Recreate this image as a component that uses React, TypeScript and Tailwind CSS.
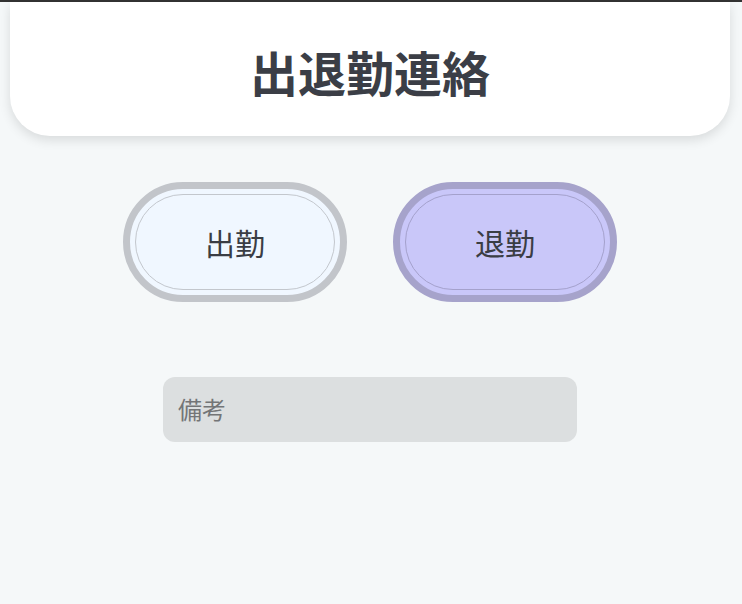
import { useState } from 'react';

const font = { fontFamily: '"Noto Sans CJK JP", "Noto Sans", sans-serif' };

export default function App() {
  const [mode, setMode] = useState<'in' | 'out'>('out');
  const [note, setNote] = useState('');

  return (
    <div className="min-h-[604px] bg-[#f5f8f9] border-t-2 border-[#333]" style={font}>
      <div className="w-[740px]">
        <header className="mx-[10px] h-[134px] bg-white rounded-b-[40px] shadow-[0_4px_12px_rgba(0,0,0,0.12)] flex items-center justify-center">
          <h1 className="text-[48px] font-bold text-[#3b3e46] leading-none mt-[4px]">出退勤連絡</h1>
        </header>

        <div className="mt-[46px] flex justify-center gap-[46px]">
          <button
            onClick={() => setMode('in')}
            className="w-[224px] h-[120px] rounded-full border-[7px] border-[#c2c5ca] bg-[#f0f7ff] p-[5px]"
          >
            <div className="h-full rounded-full border border-[#c3c7cd] flex items-center justify-center text-[30px] text-[#3a3d44]">
              出勤
            </div>
          </button>
          <button
            onClick={() => setMode('out')}
            className="w-[224px] h-[120px] rounded-full border-[7px] border-[#a6a3cb] bg-[#c9c7f9] p-[5px]"
          >
            <div className="h-full rounded-full border border-[#a4a1cc] flex items-center justify-center text-[30px] text-[#3a3d44]">
              退勤
            </div>
          </button>
        </div>

        <div className="mt-[75px] flex justify-center">
          <input
            value={note}
            onChange={(e) => setNote(e.target.value)}
            placeholder="備考"
            data-mode={mode}
            className="w-[414px] h-[65px] rounded-[12px] bg-[#dcdfe0] pl-[15px] pr-[16px] pb-[3px] text-[24px] text-[#333] placeholder:text-[#737577] outline-none"
          />
        </div>
      </div>
    </div>
  );
}
